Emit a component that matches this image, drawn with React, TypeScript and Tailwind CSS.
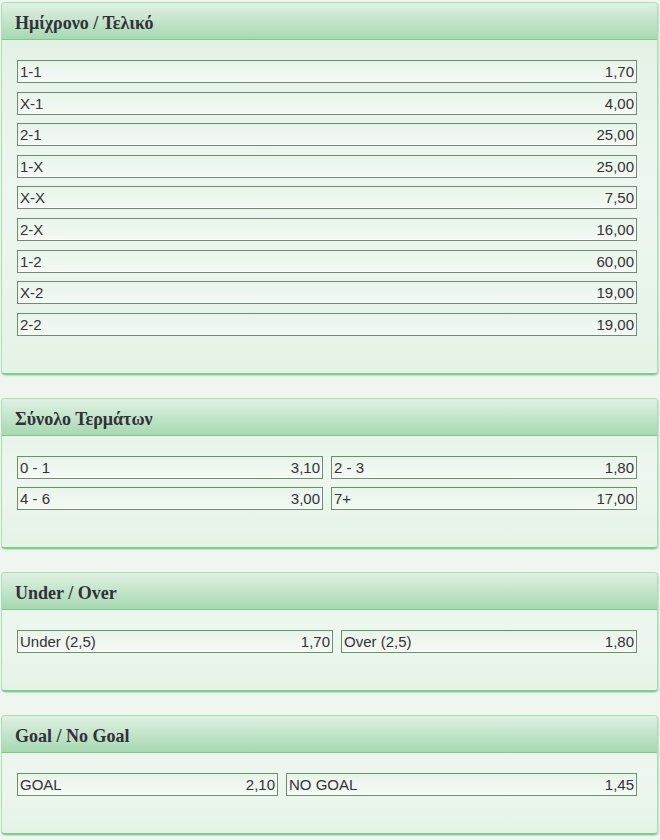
import React from "react";

type Odd = { label: string; value: string };

const HT_FT: Odd[] = [
  { label: "1-1", value: "1,70" },
  { label: "X-1", value: "4,00" },
  { label: "2-1", value: "25,00" },
  { label: "1-X", value: "25,00" },
  { label: "X-X", value: "7,50" },
  { label: "2-X", value: "16,00" },
  { label: "1-2", value: "60,00" },
  { label: "X-2", value: "19,00" },
  { label: "2-2", value: "19,00" },
];

const GOALS: Odd[] = [
  { label: "0 - 1", value: "3,10" },
  { label: "2 - 3", value: "1,80" },
  { label: "4 - 6", value: "3,00" },
  { label: "7+", value: "17,00" },
];

function OddBox({ o }: { o: Odd }) {
  return (
    <div className="flex h-[23px] items-center justify-between border border-[#6b8d70] bg-gradient-to-b from-[#e8f4ea] to-[#f4faf4] px-[2px] text-[15px] leading-none text-[#333] shadow-[inset_-1px_-1px_0_#ffffff]">
      <span>{o.label}</span>
      <span>{o.value}</span>
    </div>
  );
}

function Panel({ title, children }: { title: string; children: React.ReactNode }) {
  return (
    <div className="mx-[1px] w-[657px] overflow-hidden rounded-[4px] border border-b-2 border-[#acdcb6] border-b-[#7fcd91] bg-gradient-to-b from-[#e1f1e4] via-[#eef7ef] to-[#e5f3e7] shadow-[1px_1px_1px_rgba(120,190,135,0.35)]">
      <div className="flex h-[37px] items-center border-b border-[#7cc98d] bg-gradient-to-b from-[#e0f1e3] to-[#a6d9b1] pt-[5px] pl-[13px] font-['Liberation_Serif',serif] text-[18px] font-bold text-[#33303a]">
        {title}
      </div>
      <div className="pt-[20px] pr-[20px] pb-[37px] pl-[15px]">{children}</div>
    </div>
  );
}

export default function App() {
  return (
    <div className="min-h-[840px] w-[660px] bg-[#eff6ef] pt-[2px] font-['Liberation_Sans',Arial,sans-serif]">
      <div className="flex flex-col gap-[23px]">
        <Panel title="Ημίχρονο / Τελικό">
          <div className="flex flex-col gap-[8.6px]">
            {HT_FT.map((o) => (
              <OddBox key={o.label} o={o} />
            ))}
          </div>
        </Panel>

        <Panel title="Σύνολο Τερμάτων">
          <div className="grid grid-cols-2 gap-x-[8px] gap-y-[8px]">
            {GOALS.map((o) => (
              <OddBox key={o.label} o={o} />
            ))}
          </div>
        </Panel>

        <Panel title="Under / Over">
          <div className="grid grid-cols-[316px_1fr] gap-x-[8px]">
            <OddBox o={{ label: "Under (2,5)", value: "1,70" }} />
            <OddBox o={{ label: "Over (2,5)", value: "1,80" }} />
          </div>
        </Panel>

        <Panel title="Goal / No Goal">
          <div className="grid grid-cols-[261px_1fr] gap-x-[8px]">
            <OddBox o={{ label: "GOAL", value: "2,10" }} />
            <OddBox o={{ label: "NO GOAL", value: "1,45" }} />
          </div>
        </Panel>
      </div>
    </div>
  );
}
